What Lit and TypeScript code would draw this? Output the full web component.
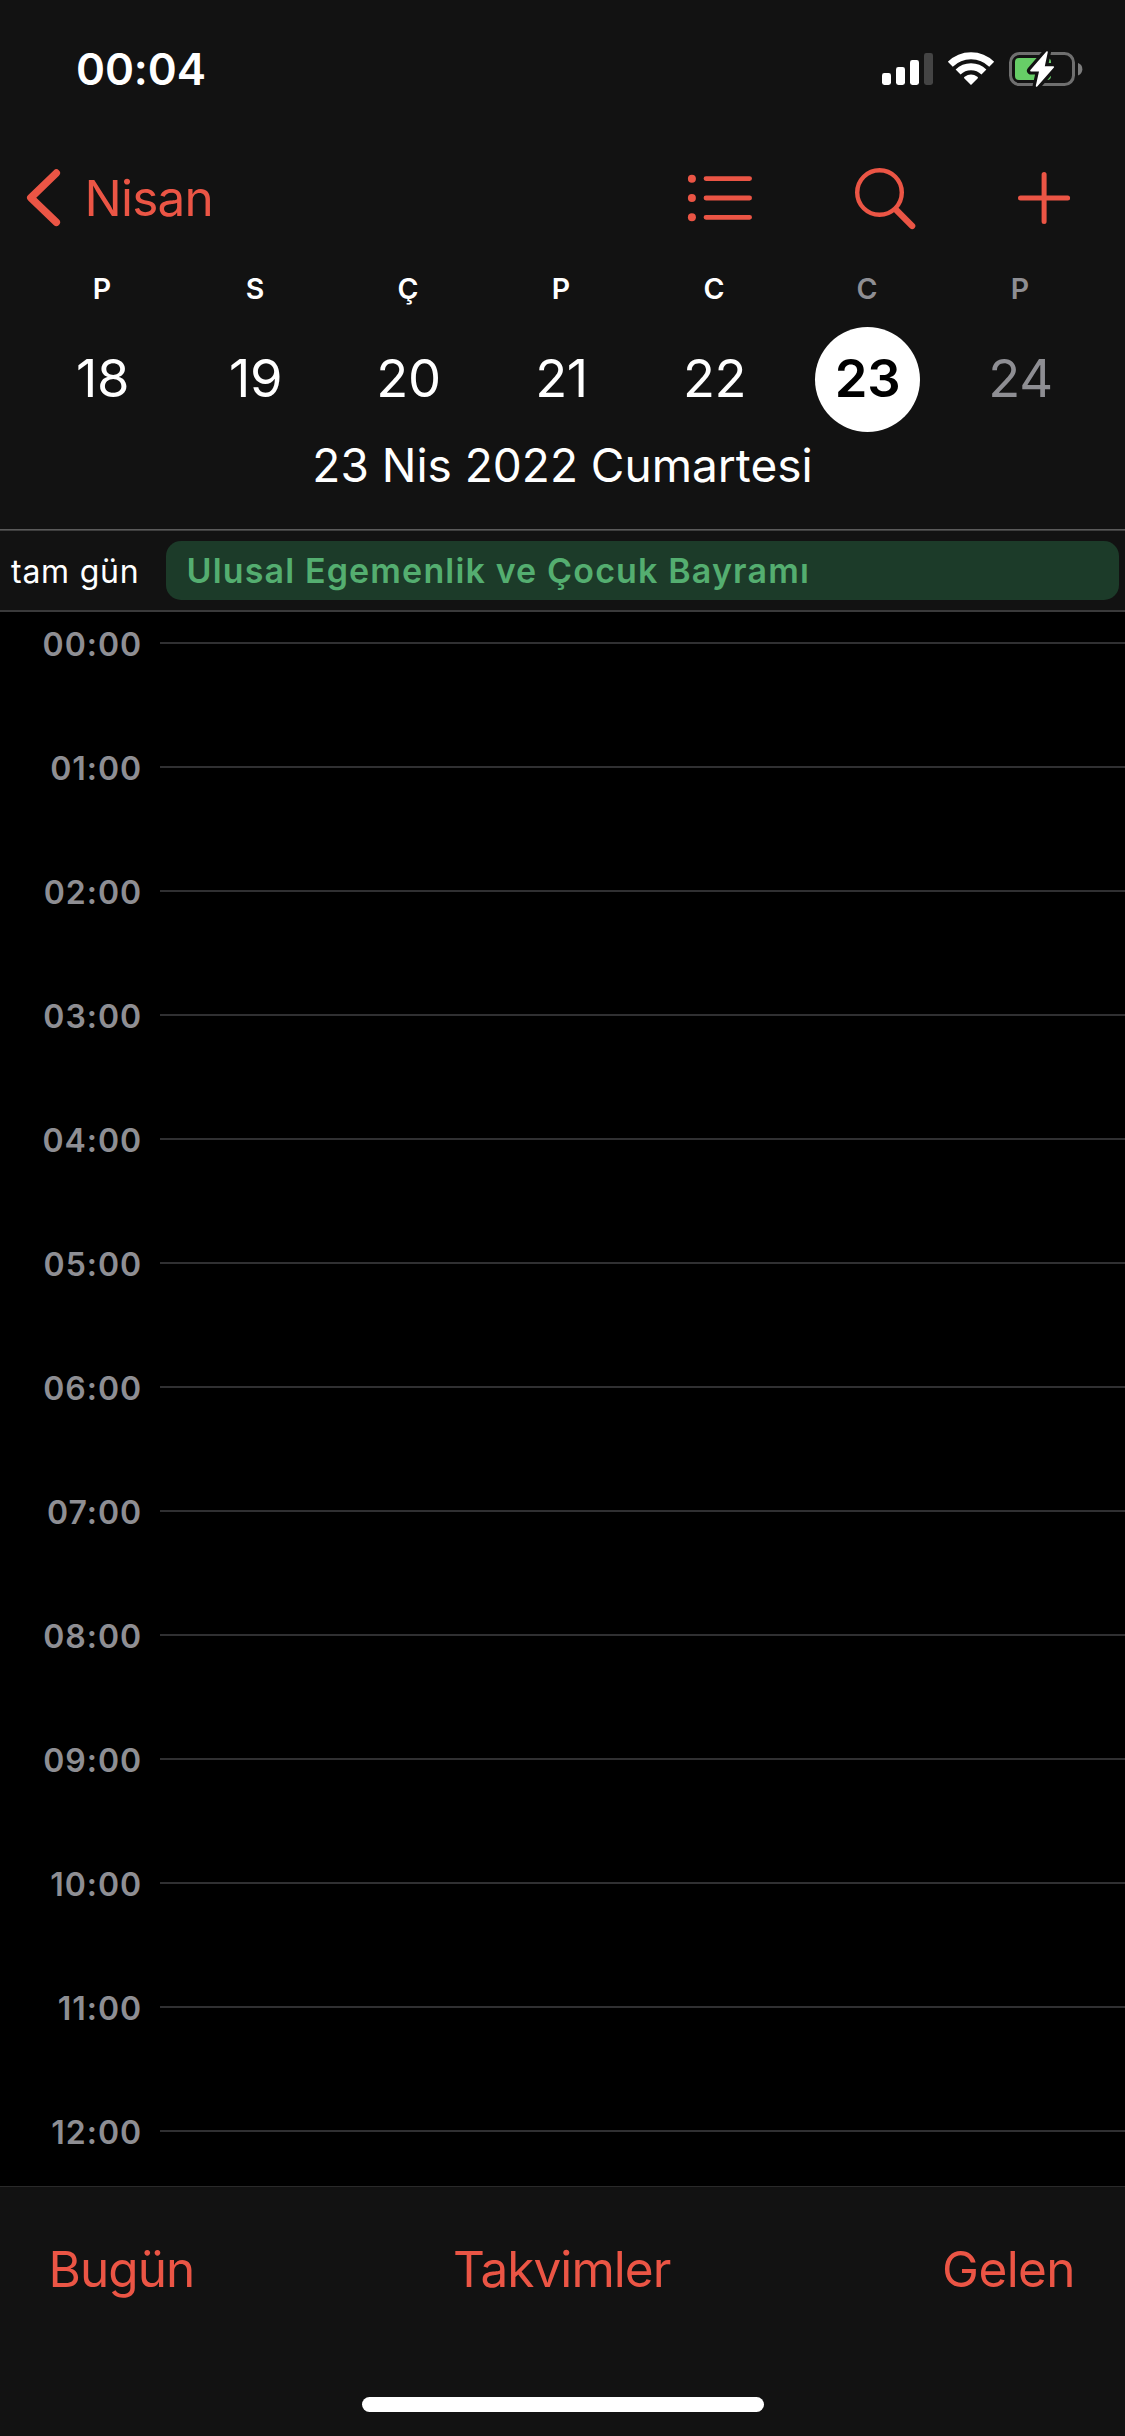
import { LitElement, html, css } from "lit";
import { customElement, property } from "lit/decorators.js";
import { classMap } from "lit/directives/class-map.js";

interface Day {
  letter: string;
  date: number;
  weekend?: boolean;
  selected?: boolean;
}

const WEEK: Day[] = [
  { letter: "P", date: 18 },
  { letter: "S", date: 19 },
  { letter: "Ç", date: 20 },
  { letter: "P", date: 21 },
  { letter: "C", date: 22 },
  { letter: "C", date: 23, weekend: true, selected: true },
  { letter: "P", date: 24, weekend: true },
];

const HOURS = Array.from({ length: 13 }, (_, h) => `${String(h).padStart(2, "0")}:00`);

@customElement("status-bar")
class StatusBar extends LitElement {
  static styles = css`
    :host {
      display: flex;
      justify-content: space-between;
      align-items: center;
      height: 138px;
      padding: 0 41px 0 76px;
      color: #fff;
    }
    .time {
      font-size: 44px;
      font-weight: 600;
      line-height: 52px;
      letter-spacing: -0.1px;
    }
    svg {
      display: block;
    }
  `;
  render() {
    return html`
      <span class="time">00:04</span>
      <svg width="204" height="40" viewBox="880 49 204 40" fill="none">
        <g fill="#fff">
          <rect x="882" y="73" width="9" height="12" rx="2.4" />
          <rect x="896" y="67" width="9" height="18" rx="2.4" />
          <rect x="910" y="60" width="9" height="25" rx="2.4" />
        </g>
        <rect x="924" y="53" width="9" height="32" rx="2.4" fill="#444" />
        <g stroke="#fff" stroke-width="7">
          <path d="M950.3 64.3A29.3 29.3 0 0 1 991.7 64.3" />
          <path d="M958.1 72.1A18.3 18.3 0 0 1 983.9 72.1" />
        </g>
        <path d="M971 85L964.2 78.2Q963.6 77.4 964.6 76.7A11 11 0 0 1 977.4 76.7Q978.4 77.4 977.8 78.2Z" fill="#fff" />
        <rect x="1010.5" y="53.5" width="63" height="31" rx="9" stroke="#6f6f6f" stroke-width="3" />
        <path d="M1078 63A6.6 6.6 0 0 1 1078 75.4Z" fill="#7c7c7c" />
        <rect x="1015" y="58" width="36" height="22" rx="4" fill="#67ce67" />
        <path
          d="M1047 52L1031 70.6H1040L1036.6 86L1053.3 67H1043.8Z"
          fill="#121212"
          stroke="#121212"
          stroke-width="8"
          stroke-linejoin="round"
        />
        <path
          d="M1047 52L1031 70.6H1040L1036.6 86L1053.3 67H1043.8Z"
          fill="#fff"
          stroke="#fff"
          stroke-width="1.6"
          stroke-linejoin="round"
        />
      </svg>
    `;
  }
}

@customElement("nav-bar")
class NavBar extends LitElement {
  static styles = css`
    :host {
      display: flex;
      justify-content: space-between;
      align-items: center;
      height: 120px;
      padding: 0 53px 0 25px;
      color: #eb5545;
    }
    .back {
      display: flex;
      align-items: center;
      gap: 21.5px;
    }
    .month {
      font-size: 49.5px;
      line-height: 60px;
      letter-spacing: -0.8px;
    }
    .actions {
      display: flex;
      align-items: center;
      gap: 98px;
    }
    svg {
      display: block;
      fill: none;
      stroke: currentColor;
      stroke-linecap: round;
      stroke-linejoin: round;
    }
    .dot {
      fill: currentColor;
      stroke: none;
    }
  `;
  render() {
    return html`
      <div class="back">
        <svg width="38" height="60" viewBox="25 168 38 60" stroke-width="7.5">
          <path d="M56.3 173.1L30.8 197.7L56.3 222.3" />
        </svg>
        <span class="month">Nisan</span>
      </div>
      <div class="actions">
        <svg width="68" height="64" viewBox="686 166 68 64" stroke-width="4.8">
          <circle class="dot" cx="691.9" cy="178.7" r="4" />
          <circle class="dot" cx="691.9" cy="198" r="4" />
          <circle class="dot" cx="691.9" cy="217.3" r="4" />
          <path d="M706 178.6H749.6M706 198H749.6M706 217.3H749.6" />
        </svg>
        <svg width="64" height="64" viewBox="852 166 64 64" stroke-width="4.4">
          <circle cx="879.5" cy="192.5" r="22.3" />
          <path d="M896.3 210L912.2 226" stroke-width="6.2" />
        </svg>
        <svg width="58" height="64" viewBox="1014 166 58 64" stroke-width="5">
          <path d="M1020.5 198H1067.6M1044.1 174.5V221.5" />
        </svg>
      </div>
    `;
  }
}

@customElement("week-strip")
class WeekStrip extends LitElement {
  @property({ attribute: false }) days: Day[] = [];

  static styles = css`
    :host {
      display: block;
      color: #fff;
    }
    .week {
      display: grid;
      grid-template-columns: repeat(7, 153px);
      padding-left: 25.5px;
    }
    .day {
      display: grid;
      grid-template-rows: 61px 121px;
      justify-items: center;
      align-items: center;
    }
    .weekend {
      color: #8e8e93;
    }
    .letter {
      font-size: 28.5px;
      font-weight: 600;
      line-height: 34px;
    }
    .date {
      display: flex;
      justify-content: center;
      align-items: center;
      box-sizing: border-box;
      width: 105px;
      height: 105px;
      padding: 0 0 3px 1px;
      border-radius: 50%;
      font-size: 52.5px;
      line-height: 60px;
      letter-spacing: -0.4px;
    }
    .selected {
      background: #fff;
      color: #000;
      font-weight: 600;
    }
    .title {
      height: 89px;
      box-sizing: border-box;
      text-align: center;
      font-size: 46px;
      line-height: 51px;
    }
  `;
  render() {
    return html`
      <div class="week">
        ${this.days.map(
          (d) => html`
            <div class=${classMap({ day: true, weekend: !!d.weekend })}>
              <span class="letter">${d.letter}</span>
              <span class=${classMap({ date: true, selected: !!d.selected })}>${d.date}</span>
            </div>
          `
        )}
      </div>
      <div class="title">23 Nis 2022 Cumartesi</div>
    `;
  }
}

@customElement("all-day-row")
class AllDayRow extends LitElement {
  static styles = css`
    :host {
      display: flex;
      height: 79px;
      padding: 10px 6px 10px 11px;
      box-sizing: border-box;
    }
    .label {
      width: 155px;
      color: #fff;
      font-size: 32px;
      line-height: 61px;
      letter-spacing: 0.75px;
    }
    .event {
      flex: 1;
      height: 59px;
      padding-left: 20.5px;
      border-radius: 15px;
      background: #1c3b29;
      color: #54ae70;
      font-size: 34px;
      font-weight: 600;
      line-height: 60px;
      letter-spacing: 1.15px;
      white-space: nowrap;
    }
  `;
  render() {
    return html`
      <span class="label">tam gün</span>
      <div class="event">Ulusal Egemenlik ve Çocuk Bayramı</div>
    `;
  }
}

@customElement("hour-list")
class HourList extends LitElement {
  @property({ attribute: false }) hours: string[] = [];

  static styles = css`
    :host {
      display: flex;
      flex-direction: column;
      gap: 92px;
      padding-top: 15px;
      overflow: hidden;
    }
    .hour {
      display: flex;
      align-items: center;
      gap: 18px;
      height: 32px;
      flex: none;
    }
    .label {
      width: 142px;
      padding-top: 3px;
      text-align: right;
      color: #8e8e93;
      font-size: 32px;
      font-weight: 600;
      line-height: 32px;
      letter-spacing: 0.95px;
    }
    .rule {
      flex: 1;
      height: 2px;
      background: #303032;
    }
  `;
  render() {
    return this.hours.map(
      (h) => html`<div class="hour"><span class="label">${h}</span><span class="rule"></span></div>`
    );
  }
}

@customElement("bottom-bar")
class BottomBar extends LitElement {
  static styles = css`
    :host {
      display: flex;
      flex-direction: column;
      justify-content: space-between;
      align-items: center;
      height: 250px;
      box-sizing: border-box;
      padding: 52px 0 24px;
      border-top: 1px solid #2a2a2a;
      background: #121212;
      color: #eb5545;
    }
    .tabs {
      display: grid;
      grid-template-columns: 1fr auto 1fr;
      width: 100%;
      box-sizing: border-box;
      padding: 0 50px 0 48.5px;
      font-size: 49.5px;
      line-height: 60px;
      letter-spacing: -0.95px;
    }
    .end {
      text-align: right;
      letter-spacing: -0.6px;
    }
    .home {
      width: 402px;
      height: 15px;
      border-radius: 8px;
      background: #fff;
    }
  `;
  render() {
    return html`
      <div class="tabs">
        <span>Bugün</span>
        <span>Takvimler</span>
        <span class="end">Gelen</span>
      </div>
      <div class="home"></div>
    `;
  }
}

@customElement("app-root")
class AppRoot extends LitElement {
  static styles = css`
    :host {
      display: flex;
      flex-direction: column;
      width: 1125px;
      height: 2436px;
      overflow: hidden;
      background: #000;
      font-family: Inter, "Liberation Sans", sans-serif;
    }
    .header {
      background: #121212;
      border-bottom: 2px solid #3a3a3b;
    }
    .divider {
      height: 2px;
      background: linear-gradient(#5a5a5a 50%, #3e3e3e 50%);
    }
    .hours {
      flex: 1;
      min-height: 0;
    }
  `;
  render() {
    return html`
      <div class="header">
        <status-bar></status-bar>
        <nav-bar></nav-bar>
        <week-strip .days=${WEEK}></week-strip>
        <div class="divider"></div>
        <all-day-row></all-day-row>
      </div>
      <hour-list class="hours" .hours=${HOURS}></hour-list>
      <bottom-bar></bottom-bar>
    `;
  }
}
